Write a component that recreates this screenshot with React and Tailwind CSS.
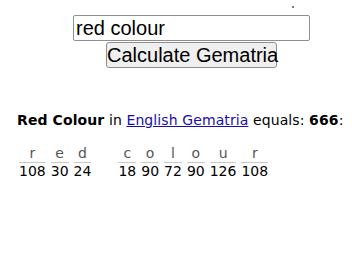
import React from "react";

const words = [
  [["r", 108], ["e", 30], ["d", 24]],
  [["c", 18], ["o", 90], ["l", 72], ["o", 90], ["u", 126], ["r", 108]],
];

const App = () => {
  return (
    <div className="w-[360px] h-[253px] bg-white relative overflow-hidden">
      {/* stray dot */}
      <div className="absolute left-[292px] top-[6px] w-[2px] h-[2px] bg-gray-600 rounded-full"></div>

      {/* Search form */}
      <div className="flex flex-col items-center pl-[23px] pt-[15px]">
        <input
          type="text"
          defaultValue="red colour"
          className="w-[237px] h-[26px] border border-[#8f8f8f] rounded-[2px] px-[2px] text-[20px] leading-none text-black font-['Liberation_Sans',Arial,sans-serif] outline-none"
        />
        <button className="w-[171px] h-[26px] mt-[1px] bg-[#efefef] border border-[#8f8f8f] rounded-[3px] text-[20px] leading-none whitespace-nowrap text-black font-['Liberation_Sans',Arial,sans-serif]">
          Calculate Gematria
        </button>
      </div>

      {/* Result */}
      <div className="pl-[17px] pt-[44px] text-[14px] text-black font-['DejaVu_Sans',Verdana,sans-serif]">
        <p className="leading-[17px] tracking-[0.1px]">
          <b>Red Colour</b> in{" "}
          <a href="#" className="text-[#1a0dab] underline">
            English Gematria
          </a>{" "}
          equals: <b>666</b>:
        </p>

        <div className="flex mt-[17px] pl-[2px]">
          {words.map((word, wi) => (
            <div key={wi} className={`flex gap-[5px] ${wi > 0 ? "ml-[27px]" : ""}`}>
              {word.map(([ch, val], i) => (
                <div key={i} className="flex flex-col items-stretch text-center">
                  <span className="leading-[14px] pb-[2px] text-[#555]">{ch}</span>
                  <span className="border-t border-[#c8c8c8] leading-[16px]">{val}</span>
                </div>
              ))}
            </div>
          ))}
        </div>
      </div>
    </div>
  );
};

export default App;
